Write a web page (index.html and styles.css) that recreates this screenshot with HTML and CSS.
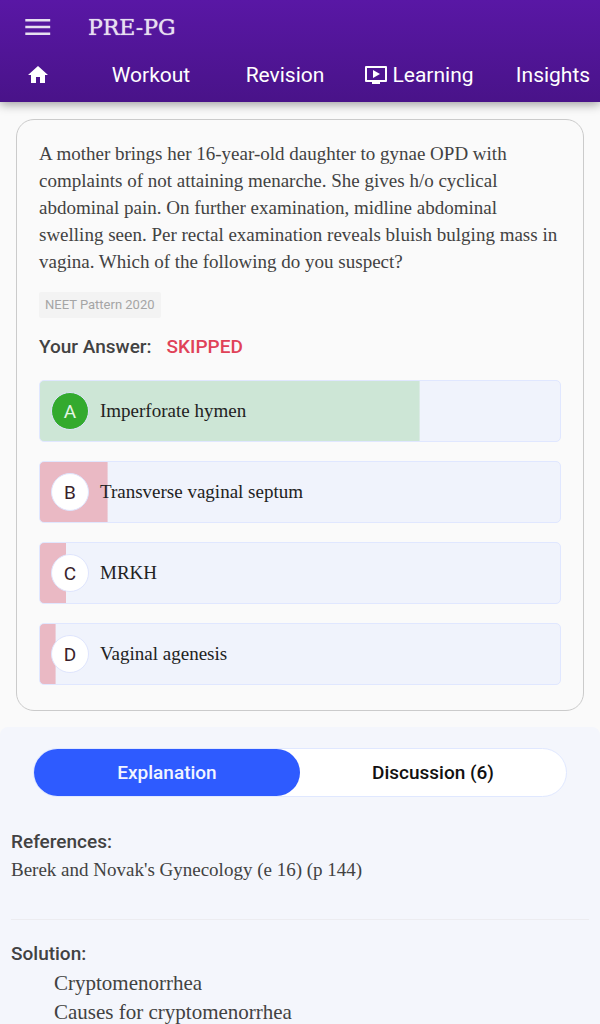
FILE: index.html
```html
<!DOCTYPE html>
<html lang="en">
<head>
<meta charset="utf-8">
<meta name="viewport" content="width=device-width, initial-scale=1">
<title>PRE-PG</title>
<link rel="stylesheet" href="styles.css">
</head>
<body>
<header class="header">
  <div class="brand-row">
    <button class="menu" type="button" aria-label="Menu">
      <svg width="26" height="18" viewBox="0 0 26 18" fill="none" stroke="currentColor" stroke-width="2.6"><path d="M0.3 2.2H25.2M0.3 9H25.2M0.3 15.8H25.2"/></svg>
    </button>
    <a class="brand" href="#">PRE-PG</a>
  </div>
  <nav class="nav" aria-label="Main">
    <a class="nav-home" href="#" aria-label="Home">
      <svg width="24" height="24" viewBox="0 0 24 24" fill="currentColor"><path d="M10 20v-6h4v6h5v-8h3L12 3 2 12h3v8z"/></svg>
    </a>
    <a class="nav-link" href="#">Workout</a>
    <a class="nav-link" href="#">Revision</a>
    <a class="nav-link" href="#">
      <svg width="24" height="20" viewBox="0 0 24 20"><path fill="none" stroke="currentColor" stroke-width="2" stroke-linejoin="round" d="M2 2H22V16H2Z"/><path fill="currentColor" d="M8 17H16V19H8ZM9 5V13L16 9Z"/></svg>
      <span>Learning</span>
    </a>
    <a class="nav-link" href="#">Insights</a>
  </nav>
</header>
<main>
  <section class="card">
    <p class="question">A mother brings her 16-year-old daughter to gynae OPD with complaints of not attaining menarche. She gives h/o cyclical abdominal pain. On further examination, midline abdominal swelling seen. Per rectal examination reveals bluish bulging mass in vagina. Which of the following do you suspect?</p>
    <span class="tag">NEET Pattern 2020</span>
    <p class="answer"><span>Your Answer:</span><span class="status">SKIPPED</span></p>
    <div class="options">
      <button class="option correct" type="button" style="--share: 73%"><span class="letter">A</span><span>Imperforate hymen</span></button>
      <button class="option" type="button" style="--share: 13%"><span class="letter">B</span><span>Transverse vaginal septum</span></button>
      <button class="option" type="button" style="--share: 5%"><span class="letter">C</span><span>MRKH</span></button>
      <button class="option" type="button" style="--share: 3%"><span class="letter">D</span><span>Vaginal agenesis</span></button>
    </div>
  </section>
  <section class="details">
    <div class="tabs" role="tablist">
      <button class="tab active" type="button" role="tab" aria-selected="true">Explanation</button>
      <button class="tab" type="button" role="tab" aria-selected="false">Discussion (6)</button>
    </div>
    <div class="references">
      <h2 class="heading">References:</h2>
      <p class="text">Berek and Novak's Gynecology (e 16) (p 144)</p>
    </div>
    <div class="solution">
      <h2 class="heading">Solution:</h2>
      <ul class="points">
        <li>Cryptomenorrhea</li>
        <li>Causes for cryptomenorrhea</li>
      </ul>
    </div>
  </section>
</main>
</body>
</html>
```
FILE: styles.css
```css
* { box-sizing: border-box; }
body {
  margin: 0;
  background: #fafafa;
  color: #424242;
  font-family: Roboto, sans-serif;
}
a { color: inherit; text-decoration: none; }
button { font: inherit; color: inherit; border: 0; background: none; cursor: pointer; }
svg { display: block; flex: none; }
p, h2, ul { margin: 0; padding: 0; }

.header {
  position: relative;
  color: #fff;
  background: linear-gradient(#5917a5, #491389);
  box-shadow: 0 2px 10px rgba(0, 0, 0, 0.4);
}
.brand-row { display: flex; align-items: center; gap: 37px; height: 54px; padding: 0 25px; }
.menu { display: flex; padding: 0; color: #e6dff0; }
.brand {
  font-family: "DejaVu Serif", serif;
  font-size: 22px;
  color: #e6dff0;
  text-shadow: 0 0 1px #e6dff0;
}
.nav { display: flex; height: 48px; padding-bottom: 6px; overflow: hidden; }
.nav-home {
  flex: 0 0 84px;
  display: flex;
  align-items: center;
  padding-left: 26px;
}
.nav-link {
  flex: 0 0 134px;
  display: flex;
  align-items: center;
  justify-content: center;
  gap: 4px;
  font-size: 21px;
}

.card {
  margin: 17px 16px 16px;
  padding: 20px 22px 25px;
  border: 1px solid #cbcbcb;
  border-radius: 18px;
}
.question {
  font-family: "Liberation Serif", serif;
  font-size: 19px;
  line-height: 27px;
}
.tag {
  display: inline-block;
  margin-top: 17px;
  padding: 0 6px;
  border-radius: 2px;
  background: #f3f3f3;
  color: #a5a5a5;
  font-size: 13px;
  line-height: 26px;
}
.answer {
  display: flex;
  gap: 15px;
  margin-top: 16px;
  font-size: 19px;
  font-weight: 500;
  line-height: 26px;
}
.status { color: #e04258; }
.options { display: grid; gap: 19px; margin-top: 20px; }
.option {
  display: flex;
  align-items: center;
  gap: 11px;
  width: 100%;
  min-height: 62px;
  padding: 0 11px;
  border: 1px solid #e0e7ff;
  border-radius: 5px;
  background: linear-gradient(#eab9c4, #eab9c4) 0 0 / var(--share) 100% no-repeat #f0f3fc;
  color: #222;
  font-family: "Liberation Serif", serif;
  font-size: 19px;
  text-align: left;
}
.option.correct { background-image: linear-gradient(#cde6d6, #cde6d6); }
.letter {
  flex: none;
  display: grid;
  place-items: center;
  width: 38px;
  height: 38px;
  border: 1px solid #dfe5fd;
  border-radius: 50%;
  background: #fff;
  color: #3a1f2b;
  font-family: Roboto, sans-serif;
  font-size: 19px;
}
.correct .letter { background: #33aa2e; color: #e4f5e6; }

.details {
  padding: 21px 11px 0;
  border-radius: 8px 8px 0 0;
  background: #f4f6fc;
}
.tabs {
  display: flex;
  margin: 0 22px;
  border: 1px solid #e0e8ff;
  border-radius: 25px;
  background: #fff;
}
.tab {
  flex: 1;
  height: 47px;
  border-radius: 25px;
  color: #111;
  font-size: 19px;
  font-weight: 500;
}
.tab.active { background: #2e5bff; color: #f2f5ff; }
.references { padding: 31px 0 36px; border-bottom: 1px solid #ececf0; }
.solution { padding-top: 20px; }
.heading { font-size: 19px; font-weight: 500; line-height: 28px; }
.text { font-family: "Liberation Serif", serif; font-size: 19px; line-height: 27px; }
.points {
  padding: 1px 0 0 43px;
  list-style: none;
  font-family: "Liberation Serif", serif;
  font-size: 21px;
  line-height: 29px;
}
```
